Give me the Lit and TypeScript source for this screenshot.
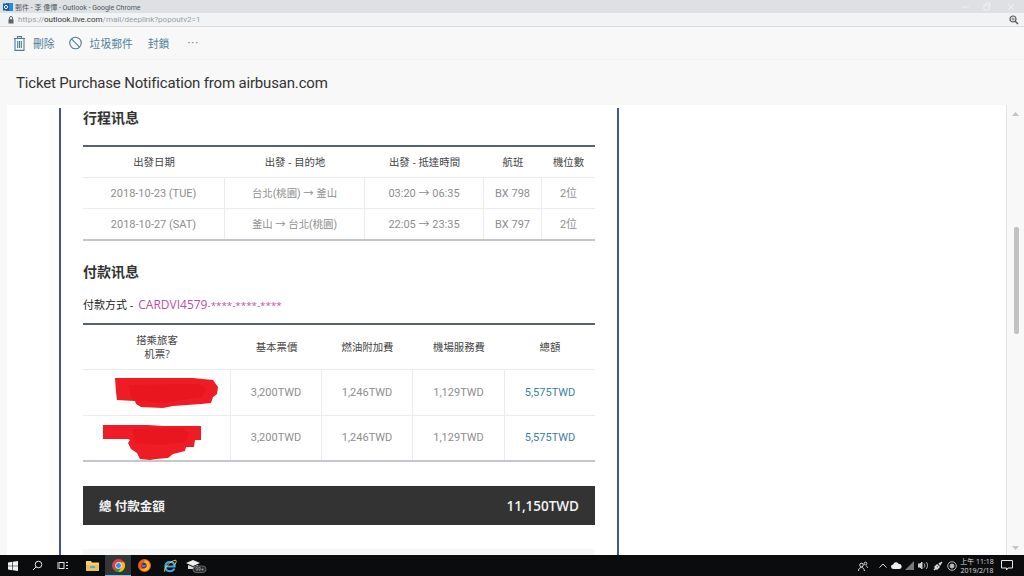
import { LitElement, html, css, svg } from "lit";
import { customElement } from "lit/decorators.js";

@customElement("app-root")
export class AppRoot extends LitElement {
  static styles = css`
    :host { display: flex; flex-direction: column; width: 1024px; height: 576px; overflow: hidden; font-family: "Open Sans", "Noto Sans CJK TC", sans-serif; background: #fff; }
    svg { display: block; flex: none; }
    .titlebar { height: 13px; background: #dde1e4; display: flex; align-items: center; padding: 0 0 0 3px; gap: 2px; font-family: Roboto, "Noto Sans CJK TC", sans-serif; font-size: 7px; color: #50555a; white-space: nowrap; }
    .titlebar .txt { flex: 1; }
    .winbtns { display: flex; align-items: center; }
    .winbtns .min { margin-right: 13px; }
    .winbtns .res { margin-right: 16px; }
    .winbtns .cls { margin-right: 9px; }
    .address { height: 14px; box-sizing: border-box; background: #f1f3f4; display: flex; align-items: center; padding: 0 5px 0 8px; gap: 4px; font-family: Roboto, sans-serif; font-size: 8px; color: #9a9ea2; border-bottom: 1px solid #d9dbdc; white-space: nowrap; }
    .address b { font-weight: 400; color: #333; }
    .address .url { flex: 1; }
    .toolbar { height: 33px; box-sizing: border-box; background: #f8f8f8; display: flex; align-items: center; padding-left: 14px; font-size: 10.8px; color: #4f7f98; border-bottom: 1px solid #efefef; }
    .toolbar .lbl { margin-left: 8px; }
    .toolbar .ban { margin-left: 14px; }
    .toolbar .blk { margin-left: 15px; }
    .toolbar .dots { margin-left: 18px; letter-spacing: 1px; color: #6a7f8c; font-size: 11px; line-height: 1; margin-top: -3px; }
    .subject { height: 45px; box-sizing: border-box; padding: 1px 0 0 16px; background: #f8f8f8; display: flex; align-items: center; font-family: Roboto, sans-serif; font-size: 15px; letter-spacing: -0.17px; color: #333; white-space: nowrap; }
    .main { flex: 1; min-height: 0; display: flex; background: #f8f8f8; overflow: hidden; }
    .pane { margin-left: 7px; width: 1000px; background: #fff; border-right: 1px solid #e6e6e6; box-sizing: border-box; }
    .frame { margin-left: 52px; width: 560px; height: 100%; box-sizing: border-box; border-left: 2px solid #46568a; border-right: 2px solid #46568a; padding: 0 22px; }
    .h { font-size: 14px; font-weight: 700; color: #333; line-height: 20px; }
    .h.first { margin-top: 3px; }
    .grid { display: grid; color: #8e8e8e; font-family: Roboto, "Noto Sans CJK TC", sans-serif; font-size: 11px; text-align: center; }
    .grid > div { display: flex; align-items: center; justify-content: center; border-bottom: 1px solid #ececec; border-right: 1px solid #ececec; line-height: 14px; box-sizing: border-box; white-space: nowrap; }
    .grid > .th { color: #444; border-right: 0; font-size: 10.4px; font-family: "Open Sans", "Noto Sans CJK TC", sans-serif; }
    .grid > .route { font-size: 10.4px; }
    .grid > .end { border-right: 0; }
    .grid > .last { border-bottom: 0; }
    .t1 { margin-top: 17px; border-top: 2px solid #58626c; border-bottom: 2px solid #c4c8cc; grid-template-columns: 142px 140px 119px 58px 53px; grid-template-rows: 31px 31px 30px; }
    .t1 > .cell { padding-top: 1px; }
    .h.second { margin-top: 21px; }
    .method { margin-top: 15px; font-size: 11px; line-height: 16px; color: #222; }
    .method .card { color: #bb4f9e; font-size: 12px; margin-left: 2px; }
    .method .stars { font-size: 9.8px; }
    .t2 { margin-top: 9px; border-top: 2px solid #58626c; border-bottom: 2px solid #c4c8cc; grid-template-columns: 148px 91px 91px 92px 90px; grid-template-rows: 45px 46px 44px; }
    .t2 .th.two { flex-direction: column; }
    .t2 .total { color: #3d7ea6; }
    .blob-a { margin-left: 20px; }
    .blob-b { margin-left: -10px; margin-top: 8px; }
    .bar { margin-top: 24px; height: 39px; background: #333; color: #f4f4f4; display: flex; align-items: center; justify-content: space-between; padding: 0 16px; font-size: 12.5px; font-weight: 600; }
    .bar .amt { font-size: 13.5px; }
    .faint { height: 6px; background: #f7f7f7; margin-top: 24px; }
    .gutter { flex: 1; display: flex; flex-direction: column; align-items: center; padding: 7px 0 5px; justify-content: space-between; position: relative; }
    .thumb { position: absolute; left: 7px; top: 122px; width: 5px; height: 107px; background: #c2c2c2; border-radius: 2px; }
    .taskbar { height: 21px; background: #0b0c0d; display: flex; align-items: center; color: #e8e8e8; }
    .tb { width: 26px; height: 21px; display: flex; align-items: center; justify-content: center; box-sizing: border-box; }
    .tb.sys { width: 25px; }
    .tb.firstapp { margin-left: 4px; }
    .tb.on { background: #33373a; border-bottom: 1px solid #7cc0e8; }
    .badge { font-family: Roboto, sans-serif; font-size: 5px; fill: #bbb; }
    .spacer { flex: 1; }
    .tray { display: flex; align-items: center; gap: 3.5px; }
    .tray .caret { margin-left: 7.5px; }
    .tray .pen { margin-left: 1.5px; }
    .tray .dot { margin-left: 0.5px; }
    .clock { font-size: 7px; line-height: 9px; text-align: center; width: 34px; color: #ddd; white-space: nowrap; }
    .notif { margin: 0 11px 0 3.5px; }
  `;

  render() {
    const arrow = "→";
    const r1 = [
      ["2018-10-23 (TUE)", `台北(桃園) ${arrow} 釜山`, `03:20 ${arrow} 06:35`, "BX 798", "2位"],
      ["2018-10-27 (SAT)", `釜山 ${arrow} 台北(桃園)`, `22:05 ${arrow} 23:35`, "BX 797", "2位"],
    ];
    return html`
      <div class="titlebar">
        <svg width="10" height="10" viewBox="0 0 10 10"><rect x="3" y="1" width="7" height="8" fill="#2a8ad4"/><rect x="0" y="1.5" width="6" height="7" fill="#0d5ca8"/><circle cx="3" cy="5" r="1.6" fill="none" stroke="#fff" stroke-width="1"/></svg>
        <span class="txt">郵件 - 李 偉憚 - Outlook - Google Chrome</span>
        <div class="winbtns">
          <svg class="min" width="9" height="9" viewBox="0 0 9 9"><path d="M1 5h7" stroke="#eef0f1" stroke-width="1"/></svg>
          <svg class="res" width="8" height="9" viewBox="0 0 8 9"><path d="M1 3h5v5H1zM3 3V1h4v4" fill="none" stroke="#eef0f1"/></svg>
          <svg class="cls" width="8" height="8" viewBox="0 0 8 8"><path d="M1 1l6 6M7 1L1 7" stroke="#eef0f1"/></svg>
        </div>
      </div>
      <div class="address">
        <svg width="6" height="8" viewBox="0 0 6 8"><rect x="0.5" y="3.2" width="5" height="4.3" fill="#5f6368"/><path d="M1.5 3.5V2a1.5 1.5 0 0 1 3 0v1.5" fill="none" stroke="#5f6368"/></svg>
        <span class="url">https://<b>outlook.live.com</b>/mail/deeplink?popoutv2=1</span>
        <svg width="10" height="10" viewBox="0 0 10 10"><circle cx="4" cy="4" r="3" fill="none" stroke="#555" stroke-width="1.2"/><path d="M6.2 6.2L9 9" stroke="#555" stroke-width="1.4"/><path d="M2.5 4h3M4 2.5v3" stroke="#555" stroke-width=".7"/></svg>
      </div>
      <div class="toolbar">
        <svg width="11" height="15" viewBox="0 0 11 15" fill="none" stroke="#4f7f98" stroke-width="1.1"><path d="M0 2.5h11M3.5 2.5V.6h4v1.9M1 2.5V14.4h9V2.5M3.7 5v7M5.5 5v7M7.3 5v7"/></svg>
        <span class="lbl">刪除</span>
        <svg class="ban" width="13" height="14" viewBox="0 0 14 14" fill="none" stroke="#4f7f98" stroke-width="1.2"><circle cx="7" cy="7" r="6.2"/><path d="M2.6 2.6l8.8 8.8"/></svg>
        <span class="lbl">垃圾郵件</span>
        <span class="blk">封鎖</span>
        <span class="dots">···</span>
      </div>
      <div class="subject">Ticket Purchase Notification from airbusan.com</div>
      <div class="main">
        <div class="pane">
          <div class="frame">
            <div class="h first">行程讯息</div>
            <div class="grid t1">
              ${["出發日期", "出發 - 目的地", "出發 - 抵達時間", "航班", "機位數"].map((t) => html`<div class="th">${t}</div>`)}
              ${r1.map((row, ri) => row.map((c, i) => html`<div class="cell ${i === 4 ? "end" : ""} ${i === 1 ? "route" : ""} ${ri === 1 ? "last" : ""}">${c}</div>`))}
            </div>
            <div class="h second">付款讯息</div>
            <div class="method">付款方式 - <span class="card">CARDVI4579<span class="stars">-****-****-****</span></span></div>
            <div class="grid t2">
              <div class="th two"><span>搭乘旅客</span><span>机票?</span></div>
              ${["基本票價", "燃油附加費", "機場服務費", "總額"].map((t) => html`<div class="th">${t}</div>`)}
              ${[0, 1].map((ri) => html`
                <div class="${ri === 1 ? "last" : ""}">${ri === 0 ? this.blobA() : this.blobB()}</div>
                ${["3,200TWD", "1,246TWD", "1,129TWD"].map((c) => html`<div class="${ri === 1 ? "last" : ""}">${c}</div>`)}
                <div class="total end ${ri === 1 ? "last" : ""}">5,575TWD</div>
              `)}
            </div>
            <div class="bar"><span>總 付款金額</span><span class="amt">11,150TWD</span></div>
            <div class="faint"></div>
          </div>
        </div>
        <div class="gutter">
          <svg width="7" height="4" viewBox="0 0 7 4"><path d="M0 4l3.5-4L7 4z" fill="#c4c4c4"/></svg>
          <div class="thumb"></div>
          <svg width="7" height="4" viewBox="0 0 7 4"><path d="M0 0l3.5 4L7 0z" fill="#c4c4c4"/></svg>
        </div>
      </div>
      <div class="taskbar">
        <div class="tb sys"><svg width="10" height="10" viewBox="0 0 10 10" fill="#f2f2f2"><path d="M0 1.4L4.3.8v3.9H0zM4.9.7L10 0v4.7H4.9zM0 5.3h4.3v3.9L0 8.6zM4.9 5.3H10V10l-5.100-.7z"/></svg></div>
        <div class="tb sys"><svg width="11" height="11" viewBox="0 0 11 11" fill="none" stroke="#e6e6e6"><circle cx="6.500" cy="4.500" r="3.300"/><path d="M4 7L1 10"/></svg></div>
        <div class="tb sys"><svg width="12" height="9" viewBox="0 0 12 9" fill="none" stroke="#e6e6e6"><rect x="2" y="1.500" width="5" height="6"/><path d="M0 1v7M9 1.500h2M9 4.500h2M9 7.500h2"/></svg></div>
        <div class="tb firstapp"><svg width="13" height="11" viewBox="0 0 13 11"><path d="M0 1h5l1 1.500h7V11H0z" fill="#f5cf6b"/><rect x="0" y="5" width="13" height="6" fill="#e9c257"/><rect x="4" y="6" width="5" height="2" fill="#5ea7d8"/></svg></div>
        <div class="tb on"><svg width="13" height="13" viewBox="0 0 24 24"><circle cx="12" cy="12" r="12" fill="#db4437"/><path d="M12 12L22.400 18A12 12 0 0 1 6 22.400z" fill="#0f9d58"/><path d="M12 6h10.400A12 12 0 0 1 12 24l5.200-9z" fill="#fbbc05"/><circle cx="12" cy="12" r="5.500" fill="#4285f4" stroke="#fff" stroke-width="1.500"/></svg></div>
        <div class="tb"><svg width="13" height="13" viewBox="0 0 24 24"><circle cx="12" cy="12" r="12" fill="#e8611a"/><path d="M12 2a10 10 0 0 1 10 10c0 5-4 10-10 10-3 0-6-1.500-8-4 3 1.500 7 1 9-1.500 1.500-2 1-5-1-6 1-1 1-2 0-3z" fill="#f9b233"/><circle cx="11" cy="12" r="5" fill="#2b3a8c"/><path d="M7 9c2 3 6 3 8 1-1 4-4 6-8 4z" fill="#e8611a"/></svg></div>
        <div class="tb"><svg width="14" height="14" viewBox="0 0 24 24" fill="none"><path d="M4 13h16c0-5-3-8-8-8-4.500 0-8 3-8 8zm0 0c0 5 3.500 8 8 8 3.500 0 6-1.500 7.500-4.500" stroke="#3fa8e0" stroke-width="3.500"/><path d="M3 22C0 17 12 3 22 2c2 3-1 7-3 9" stroke="#f5d76e" stroke-width="1.500"/></svg></div>
        <div class="tb"><svg width="22" height="15" viewBox="0 0 22 15"><path d="M1 5l7-3 7 3-7 3z" fill="#f0f0f0"/><path d="M3 7v4h10V7l-5 2z" fill="#d8d8d8"/><rect x="8" y="8" width="13" height="6.500" rx="3.200" fill="#2a2a2a" stroke="#999" stroke-width=".6"/><text class="badge" x="14.500" y="13" text-anchor="middle">99+</text></svg></div>
        <div class="spacer"></div>
        <div class="tray">
          <svg width="10" height="10" viewBox="0 0 10 10" fill="none" stroke="#ddd"><circle cx="3.500" cy="4" r="1.800"/><path d="M0.500 10c0-2 1-3.500 3-3.500S6 8 6.500 10"/><circle cx="7.500" cy="2.500" r="1.300"/><path d="M8 5c1 0 1.500 1 1.800 2"/></svg>
          <svg class="caret" width="8" height="5" viewBox="0 0 8 5" fill="none" stroke="#ddd"><path d="M.5 4.500L4 1l3.500 3.500"/></svg>
          <svg width="11" height="7" viewBox="0 0 11 7" fill="#eee"><path d="M2.500 7a2.300 2.300 0 0 1-.3-4.600A3 3 0 0 1 7.800 2 2.500 2.500 0 0 1 8.500 7z"/></svg>
          <svg width="9" height="9" viewBox="0 0 9 9"><path d="M0 9L9 0v9z" fill="#777"/></svg>
          <svg width="10" height="9" viewBox="0 0 10 9" fill="none" stroke="#ccc"><path d="M0 3h2l2-2v7L2 6H0z" fill="#ccc"/><path d="M6 2.500c1 1 1 3 0 4M8 1c2 2 2 5 0 7"/></svg>
          <svg class="pen" width="10" height="10" viewBox="0 0 10 10" fill="none" stroke="#ddd" stroke-width="1.500"><path d="M1 9l3-3M4 4l2 2M6 4l3-3M2 6l2 2 2-2-2-2zM6 2l2 2"/></svg>
          <svg class="dot" width="10" height="10" viewBox="0 0 10 10" fill="none" stroke="#bbb"><circle cx="5" cy="5" r="4.300"/><circle cx="5" cy="5" r="2" fill="#bbb"/></svg>
          <div class="clock">上午 11:18<br />2019/2/18</div>
          <svg class="notif" width="12" height="11" viewBox="0 0 12 11" fill="none" stroke="#e6e6e6"><path d="M.5.500h11v7.500H7L5.500 10V8H.5z"/></svg>
        </div>
      </div>
    `;
  }

  blobA() {
    return svg`<svg class="blob-a" width="105" height="31" viewBox="0 0 105 31"><path d="M1 1l78 0 20 2 5 7-1 7-4 3-2 6-10 1-28 2-10 2-22-1-5-3-1-3-18-1-1-8z" fill="#ee1c25"/><path d="M14 8l70-1 8 4-4 9-40 6-30-3z" fill="#e9151f"/></svg>`;
  }
  blobB() {
    return svg`<svg class="blob-b" width="98" height="35" viewBox="0 0 98 35"><path d="M0 0h28l2-1 30 2h38v14H92l-1 7H83l-1 4-12 3-5 4-12 1-6 1-10-1-3-6-6-4-3-6 2-3-2-1H0z" fill="#ee1c25"/><path d="M30 4l50-1 6 6-4 8-26 3-24-2z" fill="#e9151f"/></svg>`;
  }
}
